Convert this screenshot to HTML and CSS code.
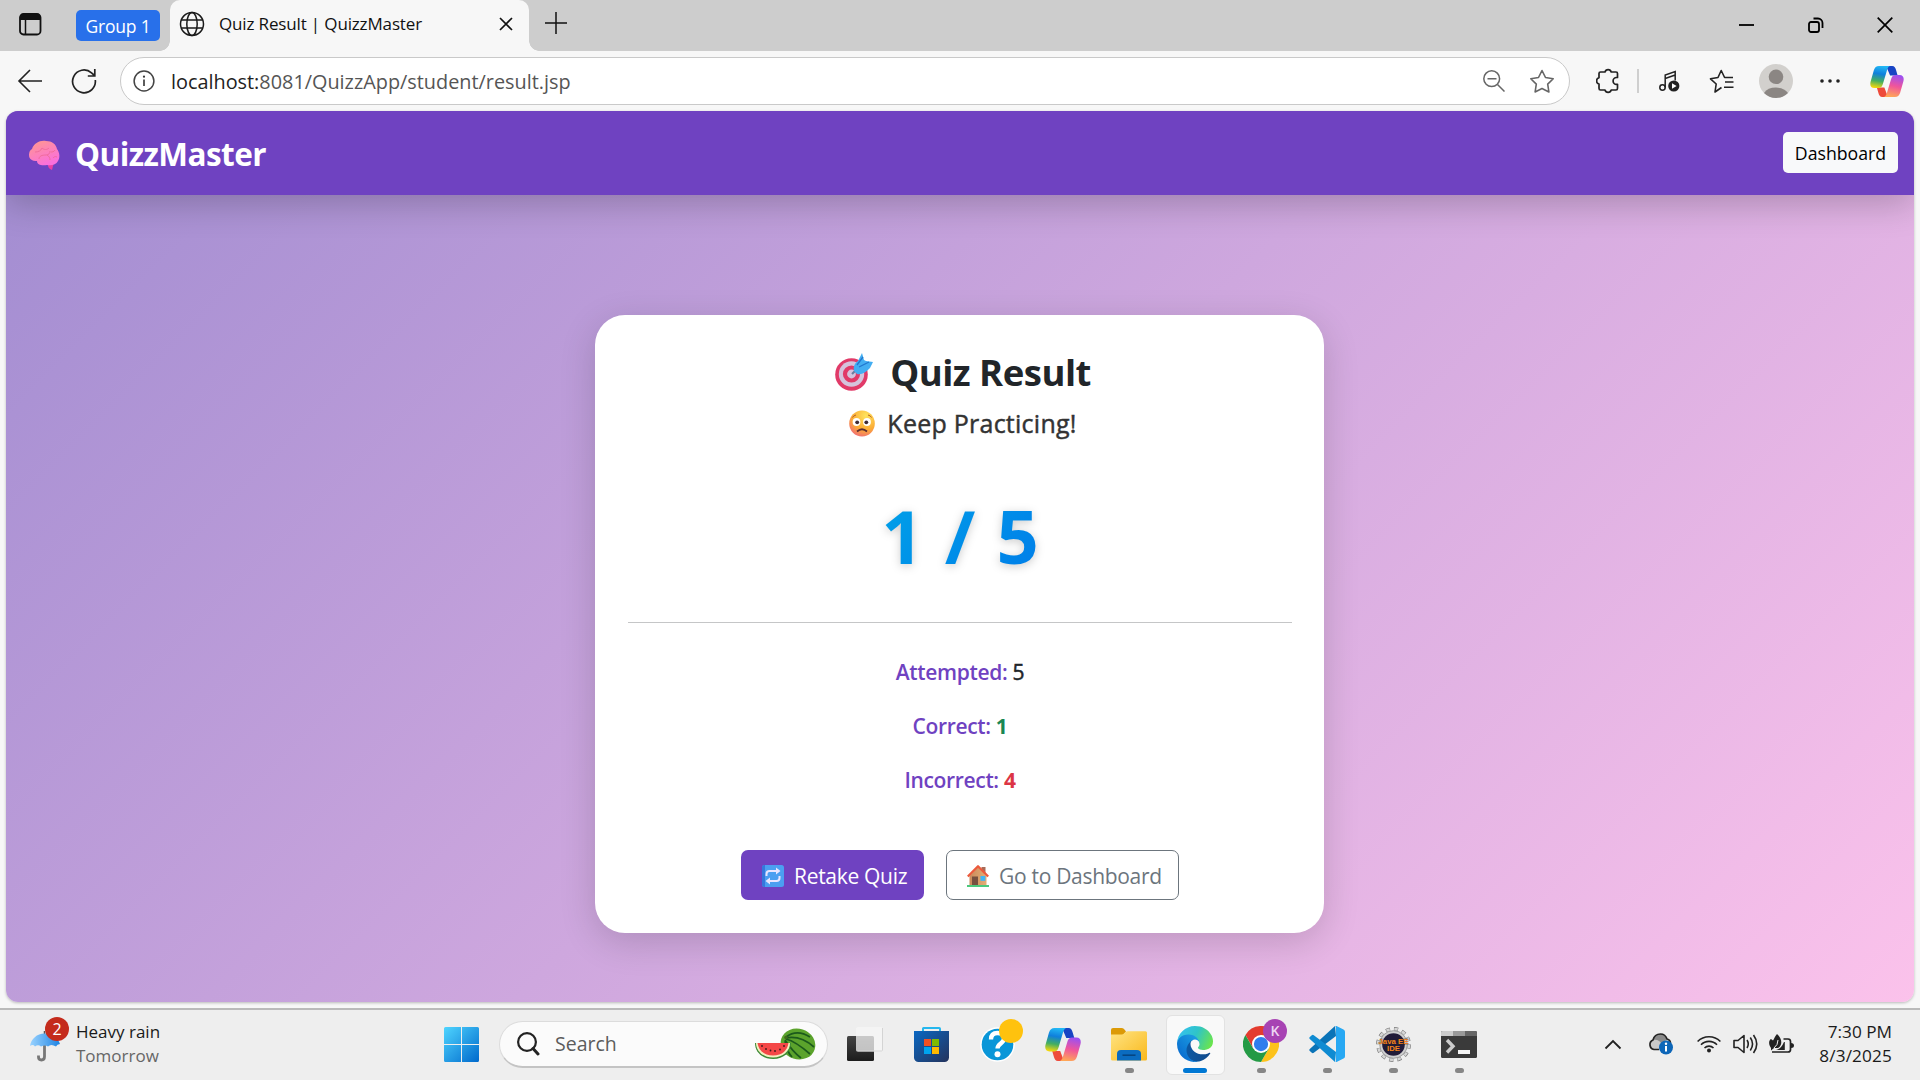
FILE: index.html
```html
<!DOCTYPE html>
<html lang="en">
<head>
<meta charset="utf-8">
<title>Quiz Result | QuizzMaster</title>
<link rel="stylesheet" href="styles.css">
</head>
<body>
<svg class="defs" width="0" height="0" aria-hidden="true">
  <defs>
    <linearGradient id="cpA" x1="0.5" y1="0" x2="0.35" y2="1"><stop offset="0" stop-color="#22b8f5"/><stop offset=".35" stop-color="#0f7fdc"/><stop offset=".68" stop-color="#43ae62"/><stop offset="1" stop-color="#f7d80c"/></linearGradient>
    <linearGradient id="cpB" x1="0.6" y1="0" x2="0.4" y2="1"><stop offset="0" stop-color="#9b50f2"/><stop offset=".5" stop-color="#f0559b"/><stop offset="1" stop-color="#ffa757"/></linearGradient>
    <symbol id="copilot" viewBox="0 0 36 33">
      <path d="M17 0h6.500c2.500 0 3.500 2 4.200 4.500l1.600 5.500h-8z" fill="#1844c4"/>
      <path d="M19 33h-6c-2.500 0-3.500-2-4.200-4.500L7.200 23h8z" fill="#ee4b3b"/>
      <path d="M9.500 0H21c-2 1-2.600 3-3.300 5.500l-4 13.500c-.8 3-2.200 4.500-4.700 4.500H4.500C.8 23.500-.5 20.500.6 16.500L4 4.500C5 1.500 6.500 0 9.500 0z" fill="url(#cpA)"/>
      <path d="M26.500 33H15c2-1 2.600-3 3.300-5.500l4-13.500c.8-3 2.200-4.500 4.700-4.500h4.500c3.700 0 5 3 3.900 7L32 28.500c-1 3-2.500 4.500-5.500 4.500z" fill="url(#cpB)"/>
    </symbol>
    <linearGradient id="win" gradientUnits="userSpaceOnUse" x1="0" y1="0" x2="35" y2="35"><stop offset="0" stop-color="#4fd5ff"/><stop offset="1" stop-color="#0069cc"/></linearGradient>
    <linearGradient id="umb"><stop offset="0" stop-color="#9ad3ff"/><stop offset="1" stop-color="#1d83e2"/></linearGradient>
    <linearGradient id="brain" x1="0" y1="0" x2=".5" y2="1"><stop offset="0" stop-color="#ff9a8b"/><stop offset="1" stop-color="#fb6fdc"/></linearGradient>
    <radialGradient id="face" cx=".65" cy=".2" r=".9"><stop offset="0" stop-color="#ffe45e"/><stop offset=".6" stop-color="#fbab35"/><stop offset="1" stop-color="#f0657d"/></radialGradient>
    <linearGradient id="store" x1="0" y1="0" x2="1" y2="1"><stop offset="0" stop-color="#0a67c2"/><stop offset="1" stop-color="#24335c"/></linearGradient>
    <linearGradient id="fold" x1="0" y1="0" x2="1" y2="1"><stop offset="0" stop-color="#ffe483"/><stop offset="1" stop-color="#f9b81b"/></linearGradient>
    <linearGradient id="edgeA"><stop offset="0" stop-color="#0c59a4"/><stop offset="1" stop-color="#114a8b"/></linearGradient>
    <linearGradient id="edgeB" x1=".9" y1=".2" x2=".3" y2=".9"><stop offset="0" stop-color="#1b9de2"/><stop offset="1" stop-color="#0a6fd0"/></linearGradient>
    <linearGradient id="edgeC" x1="0" y1=".3" x2="1" y2=".6"><stop offset="0" stop-color="#35c1f1"/><stop offset=".5" stop-color="#2fc4c8"/><stop offset="1" stop-color="#6ae44e"/></linearGradient>
    <linearGradient id="tv1" x1="0" y1="0" x2="0" y2="1"><stop offset="0" stop-color="#444"/><stop offset="1" stop-color="#1c1c1c"/></linearGradient>
    <linearGradient id="house" x1="0" y1="0" x2="1" y2="0"><stop offset="0" stop-color="#c98a5c"/><stop offset="1" stop-color="#e5ad74"/></linearGradient>
  </defs>
</svg>

<header class="tabstrip">
  <svg class="i-tabs" width="23" height="23" viewBox="0 0 23 23"><rect x="1" y="1" width="20.500" height="20.500" rx="3.500" fill="none" stroke="#111" stroke-width="1.800"/><path d="M1 7V4a3 3 0 0 1 3-3h14.500a3 3 0 0 1 3 3v3z" fill="#111"/><path d="M6.500 7v14" stroke="#111" stroke-width="1.500"/></svg>
  <span class="group"><span class="t-group">Group 1</span></span>
  <div class="tab">
    <svg class="i-globe" width="26" height="26" viewBox="0 0 26 26" fill="none" stroke="#1a1a1a" stroke-width="1.500"><circle cx="13" cy="13" r="11.500"/><ellipse cx="13" cy="13" rx="5.200" ry="11.500"/><path d="M2.500 9h21M2.500 17h21"/></svg>
    <span class="t-tab">Quiz Result | QuizzMaster</span>
    <svg class="i-tabx" width="14" height="14" viewBox="0 0 14 14"><path d="M1 1l12 12M13 1L1 13" stroke="#111" stroke-width="1.700"/></svg>
  </div>
  <svg class="i-plus" width="22" height="22" viewBox="0 0 22 22"><path d="M11 0v22M0 11h22" stroke="#111" stroke-width="1.500"/></svg>
  <div class="winctl">
    <svg width="16" height="16" viewBox="0 0 16 16"><path d="M0 8h15" stroke="#000" stroke-width="1.800"/></svg>
    <svg width="16" height="16" viewBox="0 0 16 16" fill="none" stroke="#000" stroke-width="1.800"><rect x="1" y="5" width="10" height="10" rx="2"/><path d="M5.500 1.500H10a4.500 4.500 0 0 1 4.500 4.500v5"/></svg>
    <svg width="16" height="16" viewBox="0 0 16 16"><path d="M.7.700l14.600 14.600M15.300.700L.7 15.300" stroke="#000" stroke-width="1.700"/></svg>
  </div>
</header>

<nav class="toolbar">
  <svg width="26" height="26" viewBox="0 0 26 26" fill="none" stroke="#222" stroke-width="1.600"><path d="M25 13H2M13 2L2 13l11 11"/></svg>
  <svg class="i-reload" width="26" height="26" viewBox="0 0 26 26" fill="none" stroke="#222" stroke-width="1.700"><path d="M24.300 12A11.400 11.400 0 1 1 20.500 4.800L23.500 7.500M23.800 1v7h-7"/></svg>
  <div class="address">
    <svg width="22" height="22" viewBox="0 0 22 22"><circle cx="11" cy="11" r="9.900" fill="none" stroke="#444" stroke-width="1.500"/><path d="M11 9.500V16" stroke="#333" stroke-width="1.600"/><circle cx="11" cy="6.700" r="1.100" fill="#333"/></svg>
    <span class="t-url"><b>localhost:</b>8081/QuizzApp/student/result.jsp</span>
    <svg class="i-zoom" width="22" height="22" viewBox="0 0 22 22" fill="none" stroke="#666" stroke-width="1.500"><circle cx="8.700" cy="8.700" r="7.900"/><path d="M14.500 14.500l7 7M4.500 8.700h9"/></svg>
    <svg width="26" height="25" viewBox="0 0 26 25" fill="none" stroke="#666" stroke-width="1.600" stroke-linejoin="round"><path d="M13 1.500l3.500 7 7.700 1.200-5.500 5.400 1.200 7.900L13 19.500 6.100 23l1.200-7.900L1.800 9.700l7.700-1.200z"/></svg>
  </div>
  <div class="tools">
    <svg class="i-puzzle" width="24" height="26" viewBox="0 0 24 26" fill="none" stroke="#222" stroke-width="1.700" stroke-linejoin="round"><path d="M3 5.500q0-1.500 1.500-1.500H9a3.200 3.200 0 0 1 6.200 0H20q1.500 0 1.500 1.500V9.500h-1a3.400 3.400 0 0 0 0 6.800h1v4q0 1.700-1.500 1.700h-4.800a3.200 3.200 0 0 1-6.200 0H4.500Q3 22 3 20.300V16a3.200 3.200 0 0 1 0-6.200z"/></svg>
    <span class="divider"></span>
    <svg class="i-music" width="21" height="22" viewBox="0 0 21 22" fill="none" stroke="#222" stroke-width="1.500"><circle cx="3.500" cy="17.500" r="2.700"/><path d="M6.200 17.500V5l10-3.500v9M6.200 8.500l10-3.500"/><circle cx="14.800" cy="16" r="5.600" fill="#222" stroke="none"/><path d="M13 13.200v5.600l4.600-2.800z" fill="#fff" stroke="none"/></svg>
    <svg class="i-favs" width="25" height="25" viewBox="0 0 25 25" fill="none" stroke="#222" stroke-width="1.600" stroke-linejoin="round"><path d="M12.500 18.500L6 23l1.200-8L1.500 9.800 9 8.500l3.200-7 3.400 7H24M16 13h8.500M15 18.200h9.500"/></svg>
    <svg class="i-user" width="34" height="34" viewBox="0 0 34 34"><circle cx="17" cy="17" r="17" fill="#d2d0cd"/><circle cx="17" cy="12.800" r="7.300" fill="#8b8683"/><path d="M5 29a13.500 10 0 0 1 24 0 17 17 0 0 1-24 0z" fill="#8b8683"/></svg>
    <svg class="i-dots" width="20" height="4" viewBox="0 0 20 4" fill="#222"><circle cx="2" cy="2" r="1.800"/><circle cx="10" cy="2" r="1.800"/><circle cx="18" cy="2" r="1.800"/></svg>
    <svg class="i-cop" width="34" height="31"><use href="#copilot"/></svg>
  </div>
</nav>

<main class="page">
  <div class="navbar">
    <svg class="i-brain" width="32" height="30" viewBox="0 0 32 30"><path d="M20 20l6 2-2 8c-3-1-4-3-4-5z" fill="#e93fa5"/><path d="M4 9C6 3 12 0 18 1c6 0 10 3 11 8 3 4 3 9 1 12-2 4-7 5-11 4-5 1-10 0-10-4-5 0-8-2-8-6 0-3 1-5 3-6z" fill="url(#brain)"/><path d="M7 12c3 0 6-1 7-4M14 8c2 2 5 2 7 0M11 19c0-3 3-4 7-4 3 0 4-2 4-4M19 15c2 1 3 3 3 5M27 10c-1 2-3 2-4 2M29 17c-2-1-3 0-4 1" fill="none" stroke="#ee6a98" stroke-width=".9"/></svg>
    <span class="t-brand">QuizzMaster</span>
    <a class="btn-light"><span class="t-dash">Dashboard</span></a>
  </div>
  <section class="card">
    <div class="row head">
      <svg width="38" height="38" viewBox="0 0 38 38"><circle cx="16.500" cy="21.500" r="16.300" fill="#e13a68"/><circle cx="16.500" cy="21" r="12.700" fill="#d5c3dc"/><circle cx="16.500" cy="21" r="8.600" fill="#e13a68"/><circle cx="16.500" cy="21" r="4.400" fill="#d5c3dc"/><path d="M17 21l7-7" stroke="#6b7c9c" stroke-width="2.200"/><path d="M19 18c-1-5 1-8 4-10l4-8 2 7 2 1 7 1-3 6c-4 4-8 7-13 6z" fill="#43aef2"/><path d="M24 14l10-5M22 12l6-8" stroke="#2277cf" stroke-width="1.300"/></svg>
      <h1 class="t-h1">Quiz Result</h1>
    </div>
    <div class="row sub">
      <svg width="26" height="27" viewBox="0 0 26 27"><ellipse cx="13" cy="13.500" rx="12.800" ry="13" fill="url(#face)"/><circle cx="7.500" cy="12" r="3.900" fill="#fff"/><circle cx="18" cy="12" r="3.900" fill="#fff"/><circle cx="8.200" cy="12.300" r="1.900" fill="#3c2a35"/><circle cx="17.300" cy="12.300" r="1.900" fill="#3c2a35"/><path d="M3.500 7.500q1-2 3.500-2.500M22.500 7.500q-1-2-3.500-2.500" stroke="#b5622b" fill="none"/><path d="M8 21.500q5-4.500 10 0" stroke="#5a2d33" stroke-width="1.700" fill="none"/></svg>
      <h2 class="t-h2">Keep Practicing!</h2>
    </div>
    <div class="score"><span class="t-score">1 / 5</span></div>
    <hr>
    <p class="stat s1"><span class="lab">Attempted:</span> <span class="num">5</span></p>
    <p class="stat"><span class="lab">Correct:</span> <b class="ok">1</b></p>
    <p class="stat"><span class="lab">Incorrect:</span> <b class="bad">4</b></p>
    <div class="actions">
      <a class="btn primary"><svg width="22" height="22" viewBox="0 0 22 22"><rect width="22" height="22" rx="2.500" fill="#4b9ff1"/><path d="M0 19V3a2.500 2.500 0 0 1 2.500-3H3v22h-.5A2.500 2.500 0 0 1 0 19z" fill="#3677dc"/><path d="M4.500 11V9q0-3 3-3H16M17.500 11v2q0 3-3 3H6" fill="none" stroke="#e9e5ff" stroke-width="2"/><path d="M14 2.500L18.500 6 14 9.500zM8 12.500L3.500 16 8 19.500z" fill="#e9e5ff"/></svg><span class="t-retake">Retake Quiz</span></a>
      <a class="btn outline"><svg width="22" height="22" viewBox="0 0 22 22"><path d="M14.500 2h4v7h-4z" fill="#a96b57"/><path d="M2.500 11L11 2l8.500 9v10h-17z" fill="url(#house)"/><path d="M.8 11.500L11 1.300l10.200 10.200" fill="none" stroke="#ec5a3c" stroke-width="2.300" stroke-linejoin="round"/><rect x="5" y="11.500" width="6" height="9" fill="#77503f"/><rect x="13.500" y="11" width="4.800" height="4.800" fill="#41b5f5"/><path d="M0 20h22v2H0z" fill="#4cc97c"/></svg><span class="t-go">Go to Dashboard</span></a>
    </div>
  </section>
</main>

<footer class="taskbar">
  <div class="weather">
    <div class="wicon">
      <svg width="34" height="31" viewBox="0 0 34 31"><path d="M14.500 12v13.500q0 3.500-3 3.500t-3-3v-1.500" fill="none" stroke="#777" stroke-width="2.800"/><path d="M14.500 0v4" stroke="#555" stroke-width="1.500"/><path d="M0 15C1 8 7 2.500 14.500 2.500S28 7 30 13q-3 0-4 2.500Q21 12.500 18 15.500q-3-2-7 0-3-2.500-6 0Q3 13 0 15z" fill="url(#umb)"/></svg>
      <span class="badge red">2</span>
    </div>
    <div class="wtext"><span class="t-rain">Heavy rain</span><span class="t-tom">Tomorrow</span></div>
  </div>
  <div class="slot"><svg width="35" height="35" viewBox="0 0 35 35" fill="url(#win)"><path d="M1.500 0H17v17H0V1.500A1.500 1.500 0 0 1 1.500 0zM18 0h15.500A1.500 1.500 0 0 1 35 1.500V17H18zM0 18h17v17H1.500A1.500 1.500 0 0 1 0 33.500zM18 18h17v15.500a1.500 1.500 0 0 1-1.500 1.500H18z"/></svg></div>
  <div class="search">
    <svg width="23" height="24" viewBox="0 0 23 24" fill="none" stroke="#222"><circle cx="10" cy="10" r="8.900" stroke-width="2.200"/><path d="M16 16.500l5 5.500" stroke-width="3" stroke-linecap="round"/></svg>
    <span class="t-search">Search</span>
    <svg class="i-melon" width="61" height="32" viewBox="0 0 61 32"><ellipse cx="43" cy="16" rx="17.500" ry="15.300" fill="#5ba32c" transform="rotate(18 43 16)"/><g fill="none" stroke="#1c5a1c" stroke-width="1.700"><path d="M31 9c8-6 16-5 24 0M31 10c10-2 20 2 28 9M31 11c8 2 16 8 24 15M30 12c4 6 8 12 16 18M30 13c1 6 3 12 7 16"/></g><circle cx="31" cy="9.500" r="1.800" fill="#3f6b1c"/><path d="M0 15h36c0 9-7 16-18 16S0 24 0 15z" fill="#3d8b37"/><path d="M1 15h34c0 8-7 14.500-17 14.500S1 23 1 15z" fill="#f3efc0"/><path d="M2.500 15h31c-1 7-6 12.500-15.500 12.500S3.500 22 2.500 15z" fill="#f44747"/><g fill="#3b1c1c"><circle cx="7" cy="18" r=".9"/><circle cx="11" cy="21" r=".9"/><circle cx="15.500" cy="22.500" r=".9"/><circle cx="20" cy="23" r=".9"/><circle cx="25" cy="21.500" r=".9"/><circle cx="29" cy="18" r=".9"/></g></svg>
  </div>
  <div class="apps">
    <div class="slot"><svg width="36" height="34" viewBox="0 0 36 34"><rect y="9" width="27" height="25" rx="1.500" fill="url(#tv1)"/><rect x="9" y="0" width="27" height="24.500" rx="1.500" fill="#f5f5f5" fill-opacity=".75"/><path d="M10.500 24H34.500a1 1 0 0 0 1-1V1" fill="none" stroke="#d4d4d4"/></svg></div>
    <div class="slot"><svg width="35" height="35" viewBox="0 0 35 35"><path d="M9 6V1.500A.8.800 0 0 1 9.800 1h15.400a.8.800 0 0 1 .8.800V6" fill="none" stroke="#25b7ee" stroke-width="2"/><path d="M0 4h35v26.500a4.500 4.500 0 0 1-4.500 4.500h-26A4.500 4.500 0 0 1 0 30.500z" fill="url(#store)"/><path d="M10 12h7v7h-7z" fill="#f25022"/><path d="M18 12h7v7h-7z" fill="#7fba00"/><path d="M10 20h7v7h-7z" fill="#00a4ef"/><path d="M18 20h7v7h-7z" fill="#ffb900"/></svg></div>
    <div class="slot"><svg width="35" height="35" viewBox="0 0 35 35"><circle cx="17.500" cy="17.500" r="17.300" fill="#fff"/><circle cx="17.500" cy="17.500" r="15.800" fill="#0996d8"/><path d="M11 12.500c0-5 3-6.500 6.500-6.500 4 0 6.500 2 6.500 5.500 0 5-6.500 5-6.500 10" fill="none" stroke="#fff" stroke-width="4.300"/><circle cx="17.500" cy="27.200" r="3" fill="#fff"/></svg><i class="badge gold"></i></div>
    <div class="slot"><svg width="36" height="33"><use href="#copilot"/></svg></div>
    <div class="slot run"><svg width="36" height="33" viewBox="0 0 36 33"><path d="M0 2a2 2 0 0 1 2-2h8.500q1.500 0 2.500 1l2 2.500L12 7H0z" fill="#dc9a06"/><path d="M0 6.500h10.500q1.500 0 2.500-1l1.500-1.500q1-.8 2.500-.8H34.500q1.500 0 1.500 1.500V31q0 1.500-1.500 1.500h-33Q0 32.500 0 31z" fill="url(#fold)"/><path d="M6 32.500V26q0-4 4-4h16q4 0 4 4v6.500z" fill="#0b6cc0"/><path d="M11.500 27.200h13" stroke="#064581" stroke-width="1.600"/></svg></div>
    <div class="slot run active"><svg width="36" height="36" viewBox="0 0 256 256"><path d="M231 190.500c-3.400 1.800-6.900 3.400-10.500 4.700a101.900 101.900 0 0 1-35.900 6.400c-47.300 0-88.500-32.500-88.500-74.300 0-11.400 6.400-21.900 16.400-27.300-42.800 1.800-53.800 46.400-53.800 72.500 0 74 68.100 81.400 82.800 81.400 7.900 0 19.800-2.300 27-4.600l1.300-.4a128.300 128.300 0 0 0 66.600-52.800 4 4 0 0 0-5.400-5.600z" fill="url(#edgeA)"/><path d="M105.700 241.400a79.200 79.200 0 0 1-22.700-21.300 80.700 80.700 0 0 1 29.500-120c3.200-1.500 8.500-4.100 15.600-4a32.400 32.400 0 0 1 25.700 13 31.900 31.900 0 0 1 6.300 18.700c0-.2 24.500-79.600-80-79.600-43.900 0-80 41.700-80 78.200a130.200 130.200 0 0 0 12.100 56 128 128 0 0 0 156.400 67 75.500 75.500 0 0 1-62.800-8z" fill="url(#edgeB)"/><path d="M152.300 148.900c-.9 1-3.400 2.500-3.400 5.700 0 2.600 1.700 5.100 4.700 7.200 14.400 10 41.500 8.700 41.600 8.700 10.700 0 21.100-2.900 30.300-8.300A61.400 61.400 0 0 0 256 109.400c.3-22.400-8-37.300-11.300-43.900C223.500 23.900 177.700 0 128 0 58 0 1 56.200 0 126.200c.5-36.500 36.800-66 80-66 3.500 0 23.500.3 42 10a72.600 72.600 0 0 1 30.900 29.300c6.100 10.600 7.200 24.100 7.200 29.500s-2.700 13.300-7.800 19.900z" fill="url(#edgeC)"/></svg></div>
    <div class="slot run"><svg width="36" height="36" viewBox="0 0 48 48"><circle cx="24" cy="24" r="23.500" fill="#fff"/><path d="M24 12h20.800A24 24 0 0 0 3.200 12l10.400 18z" fill="#e33b2e"/><path d="M34.400 30L24 48A24 24 0 0 0 44.800 12H24z" fill="#fcc21b"/><path d="M13.600 30L3.200 12A24 24 0 0 0 24 48l10.400-18z" fill="#249a45"/><circle cx="24" cy="24" r="12" fill="#fff"/><circle cx="24" cy="24" r="9.500" fill="#2f7ded"/></svg><i class="badge plum">K</i></div>
    <div class="slot run"><svg width="36" height="36" viewBox="0 0 36 36"><path d="M26 0L0.800 23q-1 1 0 2l2 1.800q1 .8 2 0L27 10z" fill="#0a73b7"/><path d="M26 36L.8 13q-1-1 0-2l2-1.800q1-.8 2 0L27 26z" fill="#0f8bd2"/><path d="M26 0q1-.3 2 .2L34.500 3.400Q36 4 36 5.700v24.600q0 1.700-1.500 2.300L28 35.800q-1 .5-2 .2 1 0 1-1.500v-33Q27 0 26 0z" fill="#27a8f3"/></svg></div>
    <div class="slot run"><svg width="35" height="35" viewBox="0 0 35 35"><circle cx="17.500" cy="17.500" r="15.700" fill="none" stroke="#777" stroke-width="3.400" stroke-dasharray="4.200 4.020"/><circle cx="17.500" cy="17.500" r="15.500" fill="none" stroke="#d6d6d6" stroke-width="2.600" stroke-dasharray="3.400 4.715" stroke-dashoffset="-.4"/><circle cx="17.500" cy="17.500" r="13.800" fill="#cfcfcf" stroke="#888" stroke-width=".7"/><circle cx="17.500" cy="17.500" r="11.300" fill="#211b38"/><text x="17.500" y="16.500" text-anchor="middle" class="java">Java EE</text><text x="17.500" y="24" text-anchor="middle" class="java">IDE</text></svg></div>
    <div class="slot run"><svg width="36" height="27" viewBox="0 0 36 27"><rect width="36" height="27" rx="1.500" fill="#3a3a3a"/><path d="M1.500 0H12v5H0V1.500A1.500 1.500 0 0 1 1.500 0z" fill="#ccc"/><path d="M12 0h12v5H12z" fill="#999"/><path d="M24 0h10.500A1.500 1.500 0 0 1 36 1.500V5H24z" fill="#666"/><path d="M6 9l6 6.300L6 21.500" fill="none" stroke="#ccc" stroke-width="3.400"/><path d="M17 19h12v4H17z" fill="#f5f5f5"/></svg></div>
  </div>
  <div class="tray">
    <svg width="18" height="11" viewBox="0 0 18 11"><path d="M1.500 9.500L9 2l7.500 7.500" fill="none" stroke="#222" stroke-width="1.800"/></svg>
    <svg class="i-cloud" width="25" height="22" viewBox="0 0 25 22"><path d="M6 16.500A5 5 0 0 1 5 7C6 3 9 1 12.500 1c3 0 5.500 2 6.500 5 2 .5 3.500 2 3.500 4.500L12 16.500z" fill="#c9c9c9"/><path d="M5 7c4-1 7 1 9 4l5-5c-1-3-3.500-5-6.500-5C9 1 6 3 5 7z" fill="#8a8a8a"/><path d="M11 16.500H6A5 5 0 0 1 5 7C6 3 9 1 12.500 1c3 0 5.500 2 6.500 5 2 .5 3.500 2 3.500 4.500" fill="none" stroke="#222" stroke-width="1.700"/><circle cx="18" cy="14.500" r="7" fill="#0d66b8"/><path d="M18 13v5.500" stroke="#fff" stroke-width="2"/><circle cx="18" cy="10.800" r="1.200" fill="#fff"/></svg>
    <svg class="i-wifi" width="24" height="18" viewBox="0 0 24 18" fill="none" stroke="#222" stroke-width="1.600"><path d="M.6 6.500a16 16 0 0 1 22.800 0M4 9.700a11.200 11.200 0 0 1 16 0M7.500 13a6.400 6.400 0 0 1 9 0"/><circle cx="12" cy="15.500" r="2" fill="#222" stroke="none"/></svg>
    <svg class="i-vol" width="25" height="20" viewBox="0 0 25 20" fill="none" stroke="#222" stroke-width="1.600" stroke-linejoin="round"><path d="M1 6.500h4l6-5v17l-6-5H1zM14 6q2.500 4 0 8M17.300 3.500q4.500 6.500 0 13M20.500 1q6.500 9 0 18"/></svg>
    <svg class="i-bat" width="25" height="20" viewBox="0 0 25 20"><path d="M14.500 5H19q2.500 0 2.500 2.500v8q0 2.500-2.500 2.500H3" fill="none" stroke="#222" stroke-width="1.700"/><path d="M22 9q3 0 3 2.500T22 14zM15 8h.8v8H7q5-1 8-8z" fill="#222"/><path d="M8 0c5 4 6 11 1 14H5l-3 2.500V14C-1 10 0 6 2 5l2 1.500C5 5 6 2 8 0z" fill="#222"/><path d="M5 14q4-3 4-8" fill="none" stroke="#eee"/></svg>
    <div class="clock"><span class="t-time">7:30 PM</span><span class="t-date">8/3/2025</span></div>
  </div>
</footer>
</body>
</html>
```
FILE: styles.css
```css
* { box-sizing: border-box; }
body {
  margin: 0;
  width: 1920px;
  height: 1080px;
  overflow: hidden;
  display: flex;
  flex-direction: column;
  background: #f7f7f7;
  font-family: "Open Sans", "Noto Sans", sans-serif;
  color: #212529;
}
svg { display: block; flex: none; }
span, h1, h2, p { white-space: nowrap; }
.defs { position: absolute; }

/* Browser tab strip */
.tabstrip { height: 51px; flex: none; display: flex; background: #cdcdcd; }
.i-tabs { margin: 13px 0 0 19px; }
.group {
  width: 84px; height: 31px; margin: 10px 0 0 34px;
  border-radius: 5px; background: #2870ea; color: #fff;
  display: flex; align-items: center; justify-content: center;
}
.t-group { font-size: 17.500px; letter-spacing: -.2px; }
.tab {
  position: relative;
  width: 359px; margin-left: 10px; padding: 0 16px 3px 9px;
  display: flex; align-items: center;
  background: #f7f7f7; border-radius: 10px 10px 0 0;
}
.tab::before, .tab::after {
  content: ""; position: absolute; bottom: 0; width: 10px; height: 10px;
}
.tab::before { left: -10px; background: radial-gradient(circle at 0 0, #cdcdcd 9.500px, #f7f7f7 10px); }
.tab::after { right: -10px; background: radial-gradient(circle at 100% 0, #cdcdcd 9.500px, #f7f7f7 10px); }
.t-tab { margin-left: 14px; padding-bottom: 2px; font-size: 17px; letter-spacing: -.15px; color: #111; }
.i-tabx { margin-left: auto; }
.i-plus { margin: 12px 0 0 16px; }
.winctl { margin: 17px 27px 0 auto; display: flex; gap: 53px; }

/* Browser toolbar */
.toolbar { height: 60px; flex: none; display: flex; align-items: center; padding-left: 17px; }
.i-reload { margin-left: 28px; }
.address {
  width: 1450px; height: 48px; margin-left: 23px; padding: 0 14px 0 12px;
  border: 1px solid #c9c9c9; border-radius: 24px; background: #fff;
  display: flex; align-items: center;
}
.t-url { margin-left: 16px; font-size: 19.850px; color: #555; }
.t-url b { font-weight: 400; color: #222; }
.i-zoom { margin: 0 24px 0 auto; }
.tools { flex: 1; display: flex; align-items: center; }
.i-puzzle { margin-left: 26px; }
.divider { width: 2px; height: 24px; margin-left: 17px; background: #cfcfcf; }
.i-music { margin-left: 20px; }
.i-favs { margin-left: 29px; }
.i-user { margin-left: 25px; }
.i-dots { margin-left: 27px; }
.i-cop { margin-left: 30px; }

/* Web page */
.page {
  height: 891px; flex: none; margin: 0 6px; border-radius: 12px; overflow: hidden;
  background: linear-gradient(135deg, #a18cd1, #fbc2eb);
  display: flex; flex-direction: column; align-items: center;
  box-shadow: 0 1px 3px rgba(0, 0, 0, .25);
}
.navbar {
  width: 100%; height: 84px; padding: 0 16px 0 22px;
  display: flex; align-items: center;
  background: #6f42c1; box-shadow: 0 9px 34px rgba(0, 0, 0, .21);
}
.i-brain { margin-top: 3px; }
.t-brand { margin: 1px 0 0 15px; font-size: 31.500px; font-weight: 700; color: #fff; letter-spacing: -.55px; }
.btn-light {
  width: 115px; height: 41px; margin: 0 0 2px auto; border-radius: 5px; background: #f8f9fa;
  display: flex; align-items: center; justify-content: center;
}
.t-dash { padding-top: 1px; font-size: 17.700px; color: #000; }
.card {
  width: 729px; height: 618px; margin: 120px 1px 0 0; padding: 32px 32px 0 33px;
  border-radius: 30px; background: #fff;
  box-shadow: 0 9px 36px rgba(0, 0, 0, .16);
  display: flex; flex-direction: column;
}
.row { display: flex; justify-content: center; align-items: center; padding-left: 6px; }
h1, h2, p { margin: 0; }
.head { height: 49px; gap: 17px; }
.t-h1 { font-size: 36.500px; font-weight: 700; letter-spacing: -.5px; }
.sub { height: 54px; gap: 12px; }
.t-h2 { font-size: 25px; font-weight: 500; letter-spacing: .25px; color: #333; -webkit-text-stroke: .45px #333; }
.score { height: 172px; display: flex; justify-content: center; align-items: center; }
.t-score {
  font-size: 74px; line-height: 90px; font-weight: 700; word-spacing: 2px;
  background: linear-gradient(135deg, #00a2e8, #007de9);
  -webkit-background-clip: text; background-clip: text; color: transparent;
  filter: drop-shadow(0 2px 5px rgba(0, 0, 0, .2));
}
hr { width: 100%; height: 1px; margin: 0; border: 0; background: #c5c6c7; }
.stat { height: 54px; line-height: 54px; font-size: 21px; text-align: center; letter-spacing: -.33px; }
.s1 { margin-top: 22px; }
.num { -webkit-text-stroke: .5px #212529; }
.lab { font-weight: 600; color: #6f42c1; }
.ok { color: #198754; }
.bad { color: #dc3545; }
.actions { display: flex; justify-content: center; gap: 22px; margin-top: 43px; }
.btn { height: 50px; border-radius: 7px; display: flex; align-items: center; font-size: 21px; letter-spacing: -.3px; }
.primary { width: 183px; padding-left: 21px; background: #6f42c1; color: #fff; }
.outline { width: 233px; padding-left: 20px; border: 1px solid #6c757d; color: #6c757d; }
.btn svg { margin-top: 2px; }
.btn span { margin: 2px 0 0 10px; }

/* Desktop taskbar */
.taskbar {
  height: 72px; flex: none; margin-top: auto; padding-bottom: 2px; border-top: 2px solid #bababa;
  background: #eee; display: flex; align-items: center;
}
.weather { width: 428px; padding-left: 30px; display: flex; gap: 12px; }
.wicon { position: relative; padding-top: 11px; }
.badge {
  position: absolute; width: 24px; height: 24px; border-radius: 50%;
  display: flex; align-items: center; justify-content: center;
  font-style: normal; color: #fff; line-height: 1;
}
.red { left: 15px; top: -3px; background: #c42b1c; font-size: 16px; }
.wtext { display: flex; flex-direction: column; font-size: 17px; line-height: 24px; color: #1a1a1a; }
.t-tom { color: #666; }
.slot { position: relative; width: 66px; height: 68px; flex: none; display: flex; align-items: center; justify-content: center; }
.run::after {
  content: ""; position: absolute; left: 28.500px; top: 58px;
  width: 9px; height: 5px; border-radius: 3px; background: #868686;
}
.active::before {
  content: ""; position: absolute; left: 4px; top: 5px; width: 57px; height: 58px;
  border-radius: 6px; background: #f9f9f9; border: 1px solid #e2e2e2;
}
.active svg { position: relative; }
.active::after { left: 21px; width: 24px; background: #0078d4; }
.search {
  width: 329px; height: 47px; margin: 0 4px 0 5px; padding: 0 11px 0 17px;
  border: 1px solid #dcdcdc; border-bottom: 2px solid #c4c4c4; border-radius: 24px; background: #fbfbfb;
  display: flex; align-items: center;
}
.t-search { margin-left: 15px; font-size: 19.500px; color: #5c5c5c; }
.i-melon { margin-left: auto; }
.apps { display: flex; }
.gold { left: 35px; top: 9px; background: #ffc20e; }
.plum { left: 35px; top: 9px; background: #a743b3; font-size: 14px; font-weight: 600; color: #eed5f2; }
.java { font: 700 7.800px "Liberation Sans", sans-serif; fill: #f58220; stroke: #221; stroke-width: .3px; paint-order: stroke; }
.tray { flex: 1; padding: 0 28px 0 112px; display: flex; align-items: center; }
.i-cloud { margin-left: 26px; }
.i-wifi { margin-left: 24px; }
.i-vol { margin-left: 12px; }
.i-bat { margin-left: 11px; }
.clock { margin-left: auto; display: flex; flex-direction: column; align-items: flex-end; font-size: 17.200px; line-height: 24px; color: #1a1a1a; }
.t-date { letter-spacing: .15px; }
```
